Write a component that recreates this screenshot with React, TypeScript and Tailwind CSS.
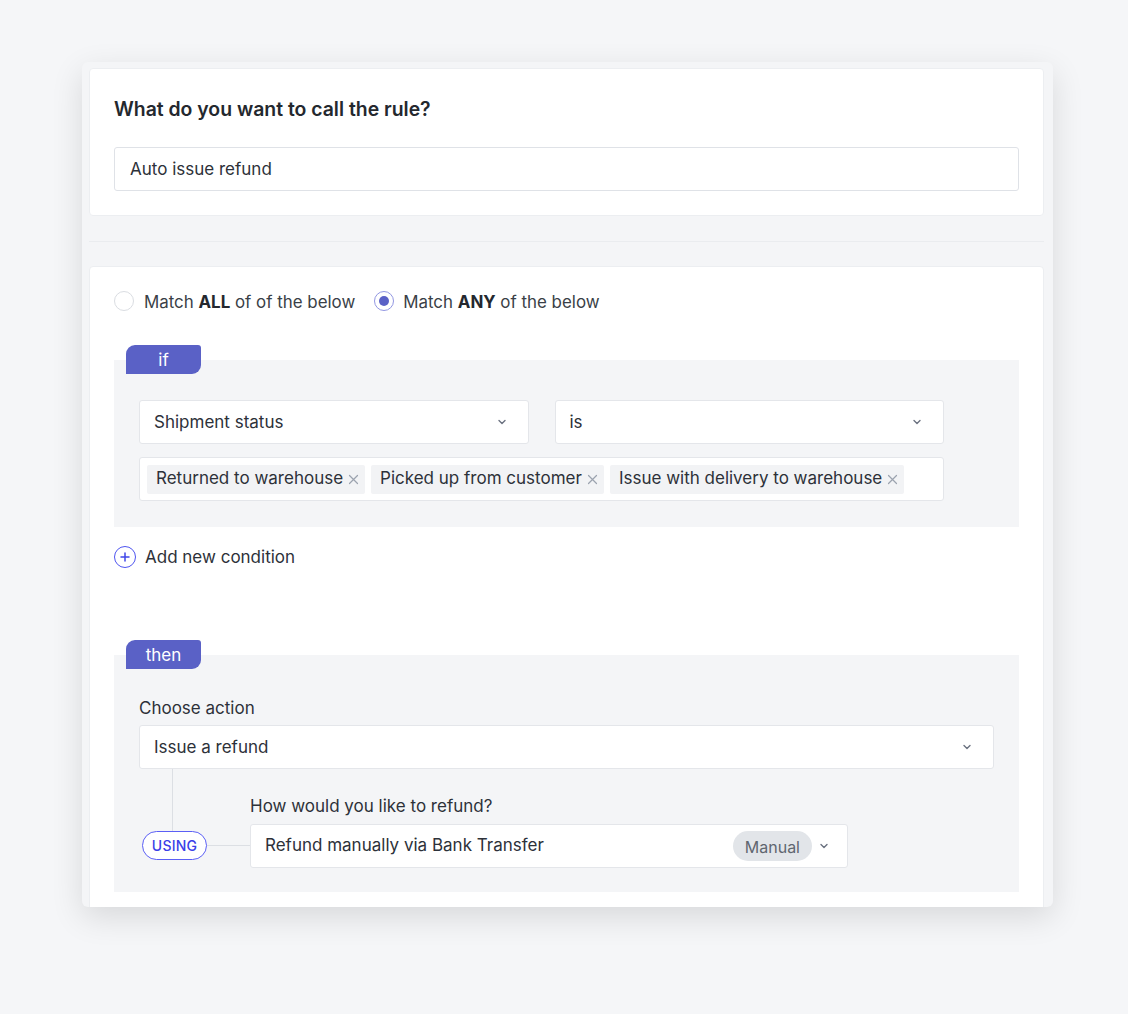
import React from 'react';

const Chevron = () => (
  <svg width="12" height="12" viewBox="0 0 12 12" fill="none" className="shrink-0">
    <path d="M3 4.5L6 7.5L9 4.5" stroke="#6b7280" strokeWidth="1.4" strokeLinecap="round" strokeLinejoin="round" />
  </svg>
);

const Close = () => (
  <svg width="11" height="11" viewBox="0 0 11 11" fill="none" className="shrink-0">
    <path d="M1.5 1.5L9.5 9.5M9.5 1.5L1.5 9.5" stroke="#9ca3af" strokeWidth="1.2" strokeLinecap="round" />
  </svg>
);

const Select = ({ value, className = '' }: { value: string; className?: string }) => (
  <div className={`h-[44px] bg-white border border-[#e4e6ea] rounded-[3px] flex items-center justify-between pl-[14px] pr-[20px] ${className}`}>
    <span className="text-[17px] text-[#2d3139] pt-[1px]">{value}</span>
    <Chevron />
  </div>
);

const Tag = ({ label }: { label: string }) => (
  <div className="h-[29px] bg-[#f2f3f5] rounded-[2px] flex items-center gap-[5px] pl-[9px] pr-[6px]">
    <span className="text-[17px] text-[#2d3139]">{label}</span>
    <Close />
  </div>
);

const StepTab = ({ label }: { label: string }) => (
  <div className="relative z-10 ml-[12px] w-[75px] h-[29px] bg-[#5a61c6] rounded-tl-[9px] rounded-tr-[3px] rounded-br-[9px] flex items-center justify-center pt-[2px]">
    <span className="text-[17px] text-white leading-none">{label}</span>
  </div>
);

const App: React.FC = () => {
  return (
    <div
      className="w-[1128px] h-[1014px] bg-[#f5f6f8] pt-[62px] pl-[82px]"
      style={{ fontFamily: 'Inter, "Noto Sans", sans-serif' }}
    >
      <div className="w-[971px] h-[845px] overflow-hidden rounded-[6px] bg-[#f4f5f7] shadow-[0_10px_32px_rgba(0,0,0,0.12)] pl-[7px] pr-[9px] pt-[6px]">
        {/* Rule name */}
        <div className="bg-white rounded-[4px] border border-[#eceef1] px-[24px] pt-[26px] pb-[24px]">
          <h2 className="text-[19.4px] font-semibold text-[#24282e] leading-[28px]">What do you want to call the rule?</h2>
          <div className="mt-[24px] h-[44px] border border-[#dfe2e7] rounded-[3px] flex items-center px-[15px]">
            <span className="text-[17px] text-[#2d3139] pt-[2px]">Auto issue refund</span>
          </div>
        </div>

        <div className="mt-[25px] h-px bg-[#eaecef]" />

        {/* Conditions */}
        <div className="mt-[24px] bg-white rounded-[4px] border border-[#eceef1] px-[24px] pt-[24px] pb-[20px]">
          <div className="flex items-center h-[20px]">
            <div className="w-[20px] h-[20px] rounded-full border border-[#dadde2] bg-white" />
            <span className="ml-[10px] text-[16.9px] text-[#3a3f47] pt-[3px]">
              Match <span className="font-bold text-[#24282e]">ALL</span> of of the below
            </span>
            <div className="ml-[19px] w-[20px] h-[20px] rounded-full border-[1.5px] border-[#9297e2] flex items-center justify-center">
              <div className="w-[10px] h-[10px] rounded-full bg-[#5a61c6]" />
            </div>
            <span className="ml-[9px] text-[16.9px] text-[#3a3f47] pt-[3px]">
              Match <span className="font-bold text-[#24282e]">ANY</span> of the below
            </span>
          </div>

          {/* if */}
          <div className="mt-[34px]">
            <StepTab label="if" />
            <div className="-mt-[14px] bg-[#f4f5f7] pl-[25px] pr-[75px] pt-[40px] pb-[26px]">
              <div className="flex gap-[26px]">
                <Select value="Shipment status" className="flex-1" />
                <Select value="is" className="flex-1" />
              </div>
              <div className="mt-[13px] h-[44px] bg-white border border-[#e4e6ea] rounded-[3px] flex items-center gap-[6px] px-[7px]">
                <Tag label="Returned to warehouse" />
                <Tag label="Picked up from customer" />
                <Tag label="Issue with delivery to warehouse" />
              </div>
            </div>
          </div>

          <div className="mt-[19px] flex items-center h-[22px]">
            <div className="w-[22px] h-[22px] rounded-full border-[1.5px] border-[#4f55f0] flex items-center justify-center">
              <svg width="10" height="10" viewBox="0 0 10 10" fill="none">
                <path d="M5 1V9M1 5H9" stroke="#4047e8" strokeWidth="1.5" strokeLinecap="round" />
              </svg>
            </div>
            <span className="ml-[9px] text-[17px] text-[#2d3139] pt-[1px]">Add new condition</span>
          </div>

          {/* then */}
          <div className="mt-[72px]">
            <StepTab label="then" />
            <div className="-mt-[14px] bg-[#f4f5f7] pl-[25px] pr-[25px] pt-[40px] pb-[24px]">
              <div className="text-[17px] text-[#2d3139] leading-[24px] pt-[1px]">Choose action</div>
              <Select value="Issue a refund" className="mt-[5px]" />
              <div className="flex">
                <div className="w-[111px] shrink-0 flex flex-col">
                  <div className="ml-[33px] h-[62px] w-px bg-[#dcdfe4]" />
                  <div className="flex items-center">
                    <div className="ml-[3px] w-[65px] h-[29px] rounded-full border border-[#5b5ff5] bg-white flex items-center justify-center">
                      <span className="text-[14px] font-medium text-[#3b40e8] tracking-[0.2px]">USING</span>
                    </div>
                    <div className="flex-1 h-px bg-[#dcdfe4]" />
                  </div>
                </div>
                <div className="pt-[25px] w-[598px]">
                  <div className="text-[17px] text-[#2d3139] leading-[24px]">How would you like to refund?</div>
                  <div className="mt-[6px] h-[44px] bg-white border border-[#e4e6ea] rounded-[3px] flex items-center justify-between pl-[14px] pr-[17px]">
                    <span className="text-[17px] text-[#2d3139]">Refund manually via Bank Transfer</span>
                    <div className="flex items-center gap-[6px]">
                      <span className="h-[30px] px-[12px] rounded-full bg-[#e2e5e9] text-[16px] text-[#5f6670] flex items-center pt-[2px]">Manual</span>
                      <Chevron />
                    </div>
                  </div>
                </div>
              </div>
            </div>
          </div>
        </div>
      </div>
    </div>
  );
};

export default App;
